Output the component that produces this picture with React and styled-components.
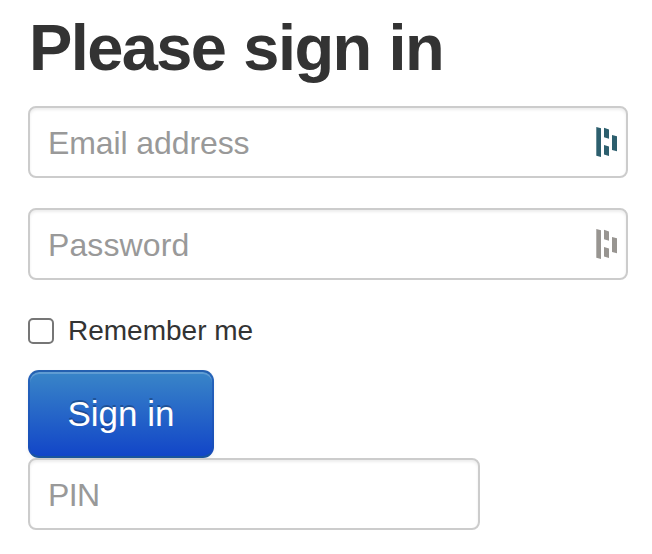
import React from "react";
import styled, { createGlobalStyle } from "styled-components";

const GlobalStyle = createGlobalStyle`
  * { box-sizing: border-box; }
  body { margin: 0; background: #fff; color: #333; font-family: "Liberation Sans", Arial, sans-serif; }
`;
const Form = styled.form`
  display: flex;
  flex-direction: column;
  align-items: flex-start;
  width: 652px;
  height: 554px;
  padding: 8px 24px 0 28px;
  overflow: hidden;
`;
const Title = styled.h1`
  margin: 0 0 18px 1px;
  font-size: 65px;
  letter-spacing: -1.6px;
  word-spacing: 1.5px;
  line-height: 80px;
  font-weight: 700;
  white-space: nowrap;
`;
const Field = styled.label`
  display: flex;
  align-items: center;
  justify-content: space-between;
  width: ${(p) => p.$width}px;
  height: 72px;
  flex: none;
  margin-bottom: ${(p) => p.$gap || 0}px;
  padding: 0 8px 0 18px;
  border: 2px solid #ccc;
  border-radius: 8px;
  background: #fff;
  box-shadow: inset 0 2px 3px rgba(0, 0, 0, 0.075);
`;
const Input = styled.input`
  flex: 1;
  min-width: 0;
  height: 40px;
  padding: 2px 0 0;
  border: 0;
  outline: 0;
  background: transparent;
  font: 32px "Liberation Sans", Arial, sans-serif;
  letter-spacing: ${(p) => p.$spacing || 0}px;
  &::placeholder { color: #999; opacity: 1; }
`;
const Remember = styled.label`
  display: flex;
  align-items: center;
  gap: 14px;
  height: 40px;
  margin: 31px 0 19px;
  font-size: 28px;
`;
const Checkbox = styled.input`
  appearance: none;
  width: 26px;
  height: 26px;
  margin: 0;
  border: 2px solid #767676;
  border-radius: 5px;
  background: #fff;
`;
const Button = styled.button`
  width: 186px;
  height: 88px;
  flex: none;
  padding: 0;
  border: 2px solid;
  border-color: #2460b0 rgba(26, 80, 176, 0.6) #1a559c;
  border-radius: 11px;
  background: linear-gradient(#3a87c8, #1144c8) border-box;
  box-shadow: inset 0 2px 0 rgba(255, 255, 255, 0.2), 0 2px 4px rgba(0, 0, 0, 0.05);
  color: #fff;
  font: 35px "Liberation Sans", Arial, sans-serif;
  text-shadow: 0 -2px 0 rgba(0, 0, 0, 0.25);
`;

const KeyIcon = ({ color }) => (
  <svg width="22" height="32" viewBox="0 0 22 32" fill={color}>
    <path d="M.3 1l4.7 1.2V31L.3 29.8zM8 1.8L13 3.4v9.4L8 11.2zM8 19l5 1.4v9.6L8 28.6zM16 9l5 1.2v15l-5-1.3z" />
  </svg>
);

export default function App() {
  return (
    <>
      <GlobalStyle />
      <Form>
        <Title>Please sign in</Title>
        <Field $width={600} $gap={30}>
          <Input placeholder="Email address" $spacing={-0.1} />
          <KeyIcon color="#2d5f6e" />
        </Field>
        <Field $width={600}>
          <Input type="password" placeholder="Password" $spacing={0.1} />
          <KeyIcon color="#989591" />
        </Field>
        <Remember>
          <Checkbox type="checkbox" />
          Remember me
        </Remember>
        <Button type="button">Sign in</Button>
        <Field $width={452}>
          <Input placeholder="PIN" $spacing={-0.6} />
        </Field>
      </Form>
    </>
  );
}
